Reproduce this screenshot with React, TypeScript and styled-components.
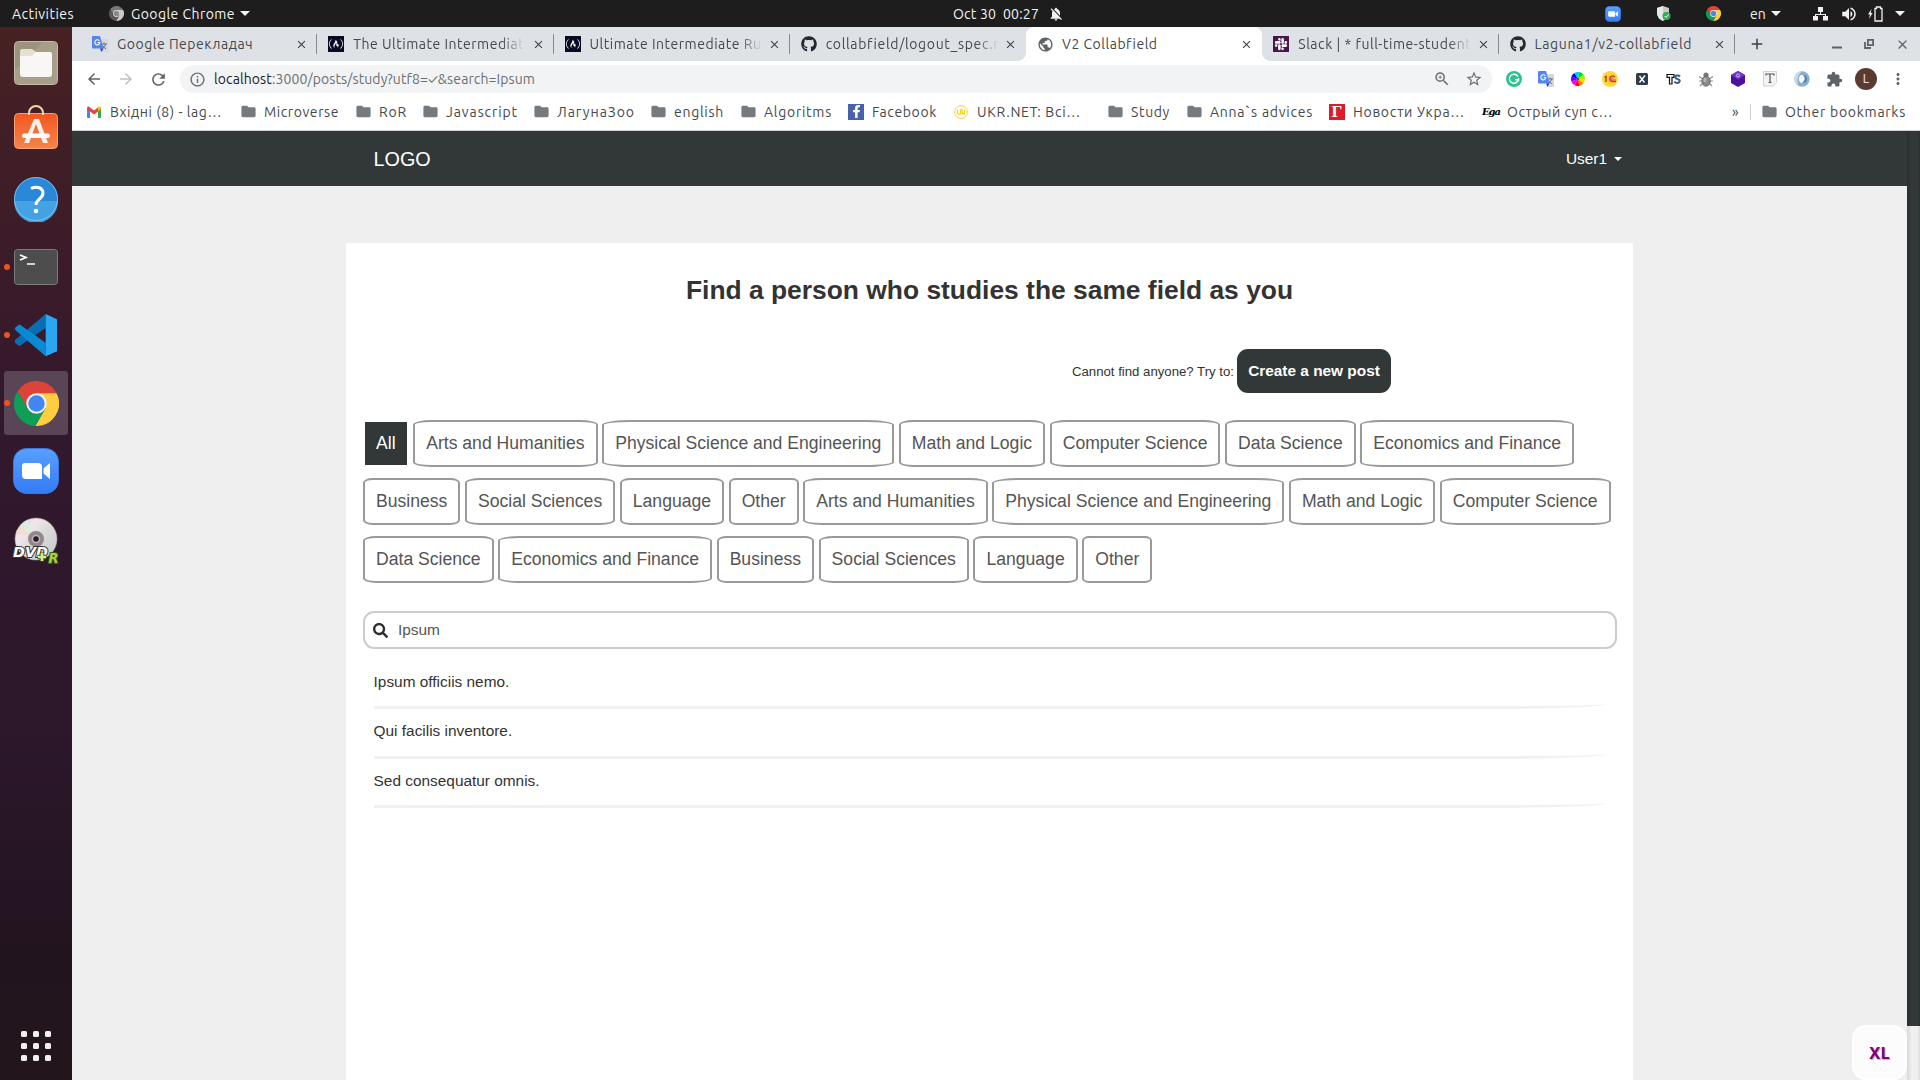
import React, { useLayoutEffect, useRef, useState } from 'react';
import styled, { createGlobalStyle, css } from 'styled-components';
import {
  MdArrowBack,
  MdArrowForward,
  MdRefresh,
  MdInfoOutline,
  MdZoomIn,
  MdStarBorder,
  MdFolder,
  MdExtension,
  MdMoreVert,
  MdClose,
  MdAdd,
  MdPublic,
  MdNotificationsOff,
  MdVolumeUp,
} from 'react-icons/md';
import { FaGithub, FaSlack, FaFacebookF, FaSearch, FaFreeCodeCamp } from 'react-icons/fa';

const uiFont = "Ubuntu, 'Noto Sans', 'Open Sans', sans-serif";
const pageFont = "'Liberation Sans', Arial, sans-serif";

const GlobalStyle = createGlobalStyle`
  * { box-sizing: border-box; }
  html, body { margin: 0; padding: 0; overflow: hidden; }
  svg { display: block; flex: none; }
`;

/* ---------- text that fills a known width ---------- */

const FitText = styled.span<{ $w: number; $fade?: boolean }>`
  flex: none;
  width: ${(p) => p.$w}px;
  white-space: pre;
  overflow: ${(p) => (p.$fade ? 'hidden' : 'visible')};
  ${(p) =>
    p.$fade &&
    css`
      mask-image: linear-gradient(to right, #000 calc(100% - 22px), transparent);
    `}
`;

type LabelProps = { w: number; fade?: boolean; children: React.ReactNode };

function Label({ w, fade, children }: LabelProps) {
  const inner = useRef<HTMLSpanElement>(null);
  const [spacing, setSpacing] = useState(0);
  useLayoutEffect(() => {
    const el = inner.current;
    if (!el) return;
    const natural = el.getBoundingClientRect().width;
    setSpacing((w - natural) / Math.max(1, (el.textContent ?? '').length));
  }, [w]);
  return (
    <FitText $w={w} $fade={fade}>
      <span ref={inner} style={{ letterSpacing: spacing }}>
        {children}
      </span>
    </FitText>
  );
}

/* ---------- desktop ---------- */

const Desktop = styled.div`
  width: 1920px;
  height: 1080px;
  display: grid;
  grid-template-rows: 27px 1fr;
  overflow: hidden;
  font-family: ${uiFont};
  background: #efefef;
`;

const TopBar = styled.header`
  display: flex;
  align-items: center;
  padding-left: 12px;
  background: #1d1d1d;
  color: #f2f2f2;
  font-size: 14px;
  line-height: 26px;
`;

const Slot = styled.span<{ $ml?: number; $w?: number }>`
  display: flex;
  flex: none;
  align-items: center;
  width: ${(p) => (p.$w ? `${p.$w}px` : 'auto')};
  margin-left: ${(p) => p.$ml ?? 0}px;
`;

const Caret = styled.i<{ $ml?: number; $size?: number }>`
  flex: none;
  margin-left: ${(p) => p.$ml ?? 0}px;
  border: ${(p) => p.$size ?? 5}px solid transparent;
  border-top-color: currentColor;
  border-bottom: 0;
`;

const Body = styled.div`
  display: grid;
  grid-template-columns: 72px 1fr;
  min-height: 0;
`;

const Dock = styled.nav`
  display: flex;
  flex-direction: column;
  align-items: center;
  gap: 4px;
  padding-top: 4px;
  background: linear-gradient(#472123 0, #3c1c29 220px, #32182d 400px, #2c172b 700px, #22141f 930px, #22161c 100%);
`;

const DockItem = styled.div<{ $active?: boolean }>`
  position: relative;
  display: flex;
  align-items: center;
  justify-content: center;
  width: 64px;
  height: 64px;
  border-radius: 3px;
  background: ${(p) => (p.$active ? '#5a4556' : 'transparent')};
`;

const RunningDot = styled.i`
  position: absolute;
  left: 0;
  top: 29px;
  width: 6px;
  height: 6px;
  border-radius: 50%;
  background: #e95420;
`;

const AppGrid = styled.div`
  display: grid;
  grid-template-columns: repeat(3, 6px);
  gap: 6px;
  margin: auto 0 19px;
`;

const GridDot = styled.i`
  width: 6px;
  height: 6px;
  border-radius: 1.5px;
  background: #f2f0ef;
`;

/* ---------- browser ---------- */

const Browser = styled.div`
  display: grid;
  grid-template-rows: 34px 36px 34px 1fr;
  min-height: 0;
  min-width: 0;
  background: #fff;
`;

const TabStrip = styled.div`
  display: flex;
  align-items: center;
  padding-left: 9px;
  background: #dee1e6;
  color: #45494d;
  font-size: 14px;
`;

const Tab = styled.div<{ $active?: boolean }>`
  position: relative;
  display: flex;
  flex: none;
  align-items: center;
  width: 236.25px;
  height: 34px;
  padding: 0 8px 0 11px;
  line-height: 33px;
  background: ${(p) => (p.$active ? '#fff' : 'transparent')};
  border-radius: 8px 8px 0 0;
  ${(p) =>
    p.$active &&
    css`
      &::before,
      &::after {
        content: '';
        position: absolute;
        bottom: 0;
        width: 8px;
        height: 8px;
      }
      &::before {
        left: -8px;
        background: radial-gradient(circle at 0 0, transparent 7.5px, #fff 8px);
      }
      &::after {
        right: -8px;
        background: radial-gradient(circle at 100% 0, transparent 7.5px, #fff 8px);
      }
    `}
`;

const TabDivider = styled.i`
  position: absolute;
  right: 0;
  top: 7px;
  width: 1px;
  height: 20px;
  background: #85888c;
`;

const Favicon = styled.span<{ $bg?: string; $gap?: number }>`
  display: flex;
  flex: none;
  align-items: center;
  justify-content: center;
  width: 16px;
  height: 16px;
  margin-right: ${(p) => p.$gap ?? 8}px;
  background: ${(p) => p.$bg ?? 'transparent'};
`;

const TabClose = styled.span`
  display: flex;
  margin-left: auto;
  width: 14px;
  color: #3c4043;
`;

const Toolbar = styled.div`
  display: flex;
  align-items: center;
  padding-left: 13px;
  color: #5f6368;
`;

const Omnibox = styled.div`
  display: flex;
  flex: none;
  align-items: center;
  width: 1312px;
  height: 28px;
  margin-left: 12px;
  padding: 0 9px 0 9px;
  border-radius: 14px;
  background: #f1f3f4;
  font-size: 14px;
  line-height: 27px;
  color: #6b6f73;
`;

const Host = styled.span`
  color: #202124;
`;

const Extensions = styled.div`
  display: flex;
  align-items: center;
  margin-left: 6px;
`;

const ExtIcon = styled.span`
  display: flex;
  align-items: center;
  justify-content: center;
  width: 32px;
  height: 28px;
`;

const Avatar = styled.span`
  width: 22px;
  height: 22px;
  border-radius: 50%;
  background: #5b3a32;
  color: #e3dbd8;
  font: 12px/22px Roboto, sans-serif;
  text-align: center;
`;

const BookmarksBar = styled.div`
  display: flex;
  align-items: center;
  padding: 0 14px 4px 14px;
  border-bottom: 1px solid #cfd1d3;
  color: #45494d;
  font-size: 14px;
  line-height: 28px;
`;

const Bookmark = styled.div<{ $mr?: number }>`
  display: flex;
  flex: none;
  align-items: center;
  margin-right: ${(p) => p.$mr ?? 16}px;
`;

const OtherBookmarks = styled.div`
  display: flex;
  align-items: center;
  margin-left: auto;
`;

const BarRule = styled.i`
  width: 1px;
  height: 16px;
  margin: 0 10px 0 9px;
  background: #cdd0d4;
`;

/* ---------- web page ---------- */

const Viewport = styled.div`
  display: grid;
  grid-template-columns: 1835px 13px;
  min-height: 0;
  background: #efefef;
  font-family: ${pageFont};
`;

const Page = styled.main`
  position: relative;
  display: grid;
  grid-template-rows: 55px 1fr;
  min-height: 0;
`;

const NavBar = styled.nav`
  display: flex;
  align-items: center;
  justify-content: space-between;
  padding: 0 285px 0 301.6px;
  background: #323738;
  color: #fff;
`;

const Brand = styled.a`
  font-size: 19.8px;
  line-height: 22px;
`;

const UserMenu = styled.a`
  display: flex;
  align-items: center;
  font-size: 15.4px;
  line-height: 22px;
`;

const Scrollbar = styled.div`
  display: grid;
  grid-template-rows: 895px 1fr;
`;

const ScrollThumb = styled.i`
  background: linear-gradient(to right, #2a2e2f, #323738 30%, #323738 80%, #2c3031);
`;

const ScrollTrack = styled.i`
  background: linear-gradient(to right, #d8d8d8, #f1f1f1 40%, #eee 80%, #dcdcdc);
`;

const Card = styled.section`
  display: flex;
  flex-direction: column;
  width: 1287px;
  margin: 57px 0 0 274px;
  padding: 0 16px 0 17px;
  background: #fff;
`;

const Title = styled.h1`
  margin: 31px 1px 0 0;
  font-size: 26.4px;
  line-height: 32px;
  font-weight: 700;
  text-align: center;
  color: #333;
`;

const CreateRow = styled.div`
  display: flex;
  align-items: center;
  justify-content: flex-end;
  gap: 3px;
  margin: 43px 226px 0 0;
  font-size: 13.2px;
  color: #333;
`;

const CreateHint = styled.span`
  line-height: 43px;
  padding-top: 1px;
`;

const CreateButton = styled.button`
  width: 154px;
  height: 44px;
  padding: 0;
  border: 0;
  border-radius: 11px;
  background: #323738;
  color: #fff;
  font: 700 15.4px ${pageFont};
  white-space: nowrap;
`;

const Filters = styled.div`
  display: flex;
  flex-wrap: wrap;
  gap: 11px 4.6px;
  margin-top: 27px;
`;

const Filter = styled.a<{ $selected?: boolean }>`
  height: 47px;
  padding: 0 11px;
  border: 2px solid ${(p) => (p.$selected ? '#fff' : '#999')};
  border-radius: ${(p) => (p.$selected ? '0' : '10%')};
  background: ${(p) => (p.$selected ? '#323738' : '#fff')};
  background-clip: padding-box;
  color: ${(p) => (p.$selected ? '#fff' : '#555')};
  font-size: 17.6px;
  line-height: 42px;
`;

const SearchBox = styled.label`
  display: flex;
  align-items: center;
  gap: 10px;
  height: 38px;
  margin-top: 28px;
  padding: 0 8px;
  border: 2px solid #ccc;
  border-radius: 11px;
  color: #2b2f30;
`;

const SearchInput = styled.input`
  flex: 1;
  padding: 0;
  border: 0;
  outline: 0;
  background: none;
  font: 15.4px ${pageFont};
  color: #555;
`;

const Results = styled.ul`
  list-style: none;
  margin: 11px 11px 0 10.6px;
  padding: 0;
`;

const Result = styled.li`
  height: 49.4px;
  border-bottom: 3px solid #f1f1f1;
  border-bottom-right-radius: 10%;
  font-size: 15.4px;
  line-height: 43px;
  color: #333;
`;

const SizeBadge = styled.div`
  position: absolute;
  right: 0;
  bottom: 0;
  display: flex;
  align-items: center;
  justify-content: center;
  width: 55px;
  height: 55px;
  padding-bottom: 1px;
  border: 2px solid #fff;
  border-radius: 14px;
  background: #fcfcfc;
  color: #800080;
  font: 700 16.5px 'Noto Sans', sans-serif;
  text-shadow: 1px 1px 1px rgba(0, 0, 0, 0.3);
`;

/* ---------- drawings ---------- */

function ChromeLogo({ size, mono }: { size: number; mono?: boolean }) {
  const [red, yellow, green, blue, ring] = mono
    ? ['#777', '#c9c9c9', '#5a5a5a', '#888', '#ddd']
    : ['#dc4437', '#ffcd40', '#109d58', '#4285f4', '#f1f1f1'];
  return (
    <svg width={size} height={size} viewBox="2 2 44 44">
      <path fill={red} d="M5.54 12.03A22 22 0 0 1 43.6 14H24L15.34 29Z" />
      <path fill={yellow} d="M43.6 14A22 22 0 0 1 22.86 45.97L32.66 29L24 14Z" />
      <path fill={green} d="M22.86 45.97A22 22 0 0 1 5.54 12.03L15.34 29H32.66Z" />
      <circle cx="24" cy="24" r="10" fill={ring} />
      <circle cx="24" cy="24" r="8" fill={blue} />
    </svg>
  );
}

function ZoomLogo({ size }: { size: number }) {
  return (
    <svg width={size} height={size} viewBox="0 0 46 46">
      <defs>
        <linearGradient id="zoomBlue" x2="0" y2="1">
          <stop stopColor="#58a0ff" />
          <stop offset="1" stopColor="#357bf6" />
        </linearGradient>
      </defs>
      <rect x=".5" y=".5" width="45" height="45" rx="13" fill="url(#zoomBlue)" stroke="#3a78dc" />
      <path fill="#fff" d="M12 15h13a4 4 0 0 1 4 4v12H13a4 4 0 0 1-4-4v-9a3 3 0 0 1 3-3Z" />
      <path fill="#fff" d="M30.500 20.500 37 15v16l-6.500-5.500Z" />
    </svg>
  );
}

const FilesLogo = () => (
  <svg width="46" height="46" viewBox="0 0 46 46">
    <rect x="1.500" y="1.500" width="43" height="43" rx="4" fill="#9c937c" stroke="#c4bca6" />
    <path d="M2 30 30 2h12l2 2v38l-2 2H4l-2-2Z" fill="#a79f89" />
    <path d="M7 11q0-2 2-2h10l4 3v6H7Z" fill="#e4dfd3" />
    <path d="M7 16h12l4-4h14q2 0 2 2v20q0 3-3 3H10q-3 0-3-3Z" fill="#f8f7f5" />
  </svg>
);

const SoftwareLogo = () => (
  <svg width="46" height="54" viewBox="0 0 46 54">
    <defs>
      <linearGradient id="bag" x2="0" y2="1">
        <stop stopColor="#f3571f" />
        <stop offset="1" stopColor="#f4844d" />
      </linearGradient>
    </defs>
    <rect x="1.500" y="9.500" width="43" height="35" rx="4" fill="url(#bag)" stroke="#f7a077" />
    <path d="M16 11V9a7 7 0 0 1 14 0v2" fill="none" stroke="#f2d6a9" strokeWidth="2" />
    <path d="M21 15h5l9 24h-5l-7-19-7 19h-5Z" fill="#f8efe9" />
    <rect x="9" y="29.500" width="28" height="4.500" rx="2.200" fill="#fff" />
  </svg>
);

const HelpLogo = () => (
  <svg width="46" height="46" viewBox="0 0 46 46">
    <circle cx="23" cy="23" r="22" fill="#2a88d8" />
    <path d="M1 25a22 22 0 0 0 44 0Z" fill="#45a2e2" />
    <circle cx="23" cy="23" r="21.500" fill="none" stroke="#86c4ef" strokeWidth=".8" />
    <path d="M18 12.500q4-2 7.500-1 4.500 1.500 4.500 5.500 0 3-3.500 6-3.500 2.800-3.500 6" fill="none" stroke="#fff" strokeWidth="3" />
    <circle cx="23" cy="35" r="2.300" fill="#fff" />
  </svg>
);

const TerminalLogo = () => (
  <svg width="46" height="38" viewBox="0 0 46 38">
    <rect x="1.500" y="1.500" width="43" height="35" rx="3" fill="#4d4d4d" stroke="#7c7c7c" />
    <path d="m7 7 6 2.500L7 12M14 16h8" fill="none" stroke="#fff" strokeWidth="1.700" />
  </svg>
);

const CodeLogo = () => (
  <svg width="44" height="44" viewBox="42 38 132 132">
    <path fill="#0a6db3" d="M137 41v42L58 138 45 127v-8Z" />
    <path fill="#0b89d4" d="m58 72 79 55v41L45 88v-6Z" />
    <path fill="#2aa6f2" d="m137 41 34 16v96l-34 15Z" />
  </svg>
);

const DiscLogo = () => (
  <svg width="50" height="52" viewBox="0 0 50 52">
    <defs>
      <linearGradient id="disc" x2="1" y2="1">
        <stop stopColor="#cfd2d2" />
        <stop offset=".3" stopColor="#f0e6ea" />
        <stop offset=".5" stopColor="#dcdcdc" />
        <stop offset="1" stopColor="#c6c6c6" />
      </linearGradient>
    </defs>
    <circle cx="25" cy="26" r="21" fill="url(#disc)" stroke="#aaa" strokeWidth=".5" />
    <path d="M25 26 9 13q3-4 7-6Z" fill="#d9eedd" opacity=".8" />
    <path d="M25 26 5 19q2-3 4-6Z" fill="#f4dcc9" opacity=".8" />
    <circle cx="25" cy="26" r="8" fill="#91888f" />
    <circle cx="25" cy="26" r="3.500" fill="#2c172b" stroke="#bdb6bb" strokeWidth="1.500" />
    <text x="2" y="43.500" fontFamily="'DejaVu Sans'" fontWeight="700" fontStyle="italic" fontSize="13.500" textLength="35" lengthAdjust="spacingAndGlyphs" fill="#fff" stroke="#333" strokeWidth="2" paintOrder="stroke">DVD</text>
    <path d="M31 39.500v9M26.500 44h9" stroke="#3c5a10" strokeWidth="4.500" />
    <path d="M31 40v8M27 44h8" stroke="#d3ec86" strokeWidth="2.600" />
    <text x="37.500" y="49.500" fontFamily="'DejaVu Sans'" fontWeight="700" fontStyle="italic" fontSize="13.500" textLength="10" lengthAdjust="spacingAndGlyphs" fill="#a9d042" stroke="#3c5a10" strokeWidth="2" paintOrder="stroke">R</text>
  </svg>
);

const TranslateLogo = () => (
  <svg width="16" height="16" viewBox="0 0 16 16">
    <path d="M6 3h9a1 1 0 0 1 1 1v11a1 1 0 0 1-1 1h-5Z" fill="#d5d7da" />
    <path d="M9 8h6M12 6.500V8M10 12.500q3-1.500 3.800-4.500M10.500 9.500q1.500 2.500 3.500 3.300" stroke="#6d7277" fill="none" />
    <path d="M1 0h7l3.500 12.500H1a1 1 0 0 1-1-1V1a1 1 0 0 1 1-1Z" fill="#5484f0" />
    <path d="M8 12.500h3.500L9.500 16Z" fill="#2743c4" />
    <path d="M7.300 4.800a2.500 2.500 0 1 0 .5 1.700H5.500" fill="none" stroke="#fff" strokeWidth="1.100" />
  </svg>
);

const GmailLogo = () => (
  <svg width="14" height="12" viewBox="0 0 14 12">
    <path d="M0 2v9q0 1 1 1h2V5Z" fill="#4285f4" />
    <path d="M14 2v9q0 1-1 1h-2V5Z" fill="#34a853" />
    <path d="M11 1.500v4L14 3V2q-1-2.500-3-.5Z" fill="#fbbc04" />
    <path d="M0 2q1-2.500 3-.5l4 3 4-3v4L7 8.500 0 3Z" fill="#ea4335" />
  </svg>
);

const ShieldCheck = () => (
  <svg width="14" height="16" viewBox="0 0 14 16">
    <path d="M6 0 12 2v5q0 5-6 8-6-3-6-8V2Z" fill="#c9cbc9" />
    <path d="M6 0v15q-6-3-6-8V2Z" fill="#e7e8e7" />
    <circle cx="9.500" cy="10" r="4" fill="#2fae4d" />
    <path d="m7.500 10 1.500 1.500 2.500-3" fill="none" stroke="#fff" />
  </svg>
);

const NetworkIcon = () => (
  <svg width="15" height="14" viewBox="0 0 15 14" fill="#f2f2f2">
    <path d="M5 0h5v5H8v2h5v2h2v4.500h-5V9h2V8H3v1h2v4.500H0V9h2V7h5V5H5Z" />
  </svg>
);

const BatteryIcon = () => (
  <svg width="15" height="16" viewBox="0 0 15 16">
    <path d="M3.500 3 0 8.500h2L1 13l3.500-6H2.800Z" fill="#f2f2f2" />
    <path d="M7 2.500h1.500V1h4v1.500H14V15H7Z" fill="none" stroke="#f2f2f2" strokeWidth="1.300" />
  </svg>
);

const RestoreIcon = () => (
  <svg width="10" height="10" viewBox="0 0 10 10" fill="none" stroke="#5f6368" strokeWidth="1.800">
    <path d="M3.900.9h5.200v5.200H3.900ZM1 3v6h6" />
  </svg>
);

const ColorWheel = () => {
  const colors = ['#ffd400', '#ff7a00', '#f00', '#e0f', '#7a00ff', '#00f', '#00c8ff', '#00e000', '#a8f000'];
  const step = (Math.PI * 2) / colors.length;
  return (
    <svg width="14" height="14" viewBox="-7 -7 14 14">
      {colors.map((c, i) => {
        const a = i * step;
        const b = a + step;
        return (
          <path key={c} fill={c} d={`M0 0L${7 * Math.cos(a)} ${7 * Math.sin(a)}A7 7 0 0 1 ${7 * Math.cos(b)} ${7 * Math.sin(b)}Z`} />
        );
      })}
      <circle r="1" fill="#333" />
    </svg>
  );
};

const BugIcon = () => (
  <svg width="14" height="15" viewBox="0 0 14 15">
    <path d="M0 4.500 4 7M14 4.500 10 7M0 9h14M1 14l3.500-3.500M13 14l-3.500-3.500" stroke="#8b8b8b" strokeWidth="1.100" />
    <circle cx="7" cy="3" r="2.600" fill="#777" />
    <ellipse cx="7" cy="9.200" rx="4.200" ry="5" fill="#8a8a8a" stroke="#606060" strokeWidth=".8" />
    <ellipse cx="6" cy="8" rx="1.500" ry="2.200" fill="#b5b5b5" />
  </svg>
);

const extensions: React.ReactNode[] = [
  <svg width="16" height="16" viewBox="0 0 16 16">
    <circle cx="8" cy="8" r="8" fill="#2bc48e" />
    <path d="M11.800 5.500a4.500 4.500 0 1 0 .5 3.200H9M12.500 7v3.500" fill="none" stroke="#fff" strokeWidth="1.400" />
  </svg>,
  <TranslateLogo />,
  <ColorWheel />,
  <svg width="16" height="16" viewBox="0 0 16 16">
    <circle cx="8" cy="8" r="8" fill="#fbd73c" />
    <path d="M2.500 6.500 4 5.500V11M13 6.200a2.800 2.800 0 1 0-2.800 4.300H14" fill="none" stroke="#d9342b" strokeWidth="1.500" />
    <path d="M11 7.800a1 1 0 1 0-.8 1.200H14" fill="none" stroke="#d9342b" strokeWidth=".8" />
  </svg>,
  <svg width="12" height="12" viewBox="0 0 12 12">
    <rect width="12" height="12" rx="1.500" fill="#2f3d4a" />
    <path d="m3.500 3 5 6.500M9 2.500 3.500 9.500" stroke="#fff" strokeWidth="1.400" />
  </svg>,
  <svg width="16" height="12" viewBox="0 0 16 12">
    <path d="M1 1.500h7v2.800H6V11H3.500V4.300H1Z" fill="#fff" stroke="#111" strokeWidth="1.200" />
    <path d="M14 3.500q-1-1.200-3-1-2 .3-1.800 1.800.3 1.400 2.500 1.800 2.300.6 2 2.300-.5 1.500-2.500 1.500-1.700 0-3-1.200" fill="none" stroke="#3a6186" strokeWidth="2" />
  </svg>,
  <BugIcon />,
  <svg width="16" height="16" viewBox="0 0 16 16">
    <path d="m8 0 7 4v8l-7 4-7-4V4Z" fill="#4c1099" />
    <path d="m8 0 7 4-7 4.500L1 4Z" fill="#7436c9" />
    <circle cx="8" cy="4.500" r="1.600" fill="none" stroke="#d7c0f3" strokeWidth=".9" />
  </svg>,
  <svg width="14" height="16" viewBox="0 0 14 16">
    <path d="M.5.500h13v11l-3 3.500H.5Z" fill="#f4f4f4" stroke="#d2d2d2" />
    <path d="M3 4.500V3h8v1.500M7 3v8.500M5.500 11.500h3" fill="none" stroke="#555" strokeWidth="1.200" />
  </svg>,
  <svg width="16" height="16" viewBox="0 0 16 16">
    <circle cx="8" cy="8" r="7.700" fill="#89aed2" />
    <path d="M8 .5A7.500 7.500 0 0 0 4 14.500Q2 5 8 .5Z" fill="#c7daec" />
    <ellipse cx="8" cy="8" rx="3" ry="4" fill="#fff" />
    <path d="M9 4q4 4-1 8 5 0 5-4T9 4Z" fill="#4f7fb2" />
  </svg>,
  <MdExtension size={17} color="#5f6368" />,
  <Avatar>L</Avatar>,
  <MdMoreVert size={18} color="#5f6368" />,
];

/* ---------- data ---------- */

type TabInfo = {
  title: string;
  w: number;
  icon: React.ReactNode;
  bg?: string;
  fade?: boolean;
  active?: boolean;
  divider?: boolean;
};

const tabs: TabInfo[] = [
  { title: 'Google Перекладач', w: 136, icon: <TranslateLogo />, divider: true },
  { title: 'The Ultimate Intermediat', w: 171, icon: <FaFreeCodeCamp size={14} color="#fff" />, bg: '#0a0a23', fade: true, divider: true },
  { title: 'Ultimate Intermediate Ru', w: 172, icon: <FaFreeCodeCamp size={14} color="#fff" />, bg: '#0a0a23', fade: true, divider: true },
  { title: 'collabfield/logout_spec.r', w: 173, icon: <FaGithub size={16} color="#24292e" />, fade: true },
  { title: 'V2 Collabfield', w: 95, icon: <MdPublic size={17} color="#5f6368" />, active: true },
  { title: 'Slack | * full-time-student', w: 173, icon: <FaSlack size={14} color="#fff" />, bg: '#4a154b', fade: true, divider: true },
  { title: 'Laguna1/v2-collabfield', w: 157, icon: <FaGithub size={16} color="#24292e" />, divider: true },
];

const Folder = () => <MdFolder size={17} color="#757a7e" />;

const Cursive = styled.span`
  color: #000;
  font: italic 700 10px 'DejaVu Serif', serif;
  letter-spacing: -1px;
`;

const RedLetter = styled.span`
  color: #fff;
  font: 700 17px/16px 'Liberation Serif', serif;
`;

type BookmarkInfo = { title: string; w: number; icon?: React.ReactNode; bg?: string; mr?: number };

const bookmarks: BookmarkInfo[] = [
  { title: 'Вхідні (8) - lag…', w: 112, icon: <GmailLogo />, mr: 18 },
  { title: 'Microverse', w: 75 },
  { title: 'RoR', w: 28, mr: 15 },
  { title: 'Javascript', w: 72, mr: 15 },
  { title: 'ЛагунаЗоо', w: 78, mr: 15 },
  { title: 'english', w: 50 },
  { title: 'Algoritms', w: 68 },
  { title: 'Facebook', w: 65, icon: <FaFacebookF size={13} color="#fff" />, bg: '#4961ad' },
  {
    title: 'UKR.NET: Всі…',
    w: 104,
    mr: 26,
    icon: (
      <svg width="14" height="14" viewBox="0 0 14 14" fill="none" stroke="#f2cf1d">
        <circle cx="7" cy="7" r="6.400" strokeWidth=".9" />
        <path d="M3.500 4.500V8q0 1.500 1.500 1.500T6.500 8V5q1-1 1.700 0v4.500M8.200 7.500l2.300 2M10.500 4.500v5" strokeWidth="1.200" />
      </svg>
    ),
  },
  { title: 'Study', w: 39 },
  { title: 'Anna`s advices', w: 103 },
  { title: 'Новости Укра…', w: 112, icon: <RedLetter>Г</RedLetter>, bg: '#df1a2b', mr: 18 },
  { title: 'Острый суп с…', w: 106, icon: <Cursive>Ega</Cursive> },
];

const filters = [
  'All',
  'Arts and Humanities',
  'Physical Science and Engineering',
  'Math and Logic',
  'Computer Science',
  'Data Science',
  'Economics and Finance',
  'Business',
  'Social Sciences',
  'Language',
  'Other',
  'Arts and Humanities',
  'Physical Science and Engineering',
  'Math and Logic',
  'Computer Science',
  'Data Science',
  'Economics and Finance',
  'Business',
  'Social Sciences',
  'Language',
  'Other',
];

const results = ['Ipsum officiis nemo.', 'Qui facilis inventore.', 'Sed consequatur omnis.'];

const dockApps: { icon: React.ReactNode; running?: boolean; active?: boolean }[] = [
  { icon: <FilesLogo /> },
  { icon: <SoftwareLogo /> },
  { icon: <HelpLogo /> },
  { icon: <TerminalLogo />, running: true },
  { icon: <CodeLogo />, running: true },
  { icon: <ChromeLogo size={45} />, running: true, active: true },
  { icon: <ZoomLogo size={46} /> },
  { icon: <DiscLogo /> },
];

export default function App() {
  return (
    <Desktop>
      <GlobalStyle />
      <TopBar>
        <Label w={62}>Activities</Label>
        <Slot $ml={35} $w={16}><ChromeLogo size={15} mono /></Slot>
        <Slot $ml={6}><Label w={104}>Google Chrome</Label></Slot>
        <Caret $ml={5} />
        <Slot $ml={703}><Label w={86}>Oct 30  00:27</Label></Slot>
        <Slot $ml={9}><MdNotificationsOff size={16} /></Slot>
        <Slot $ml={541}><ZoomLogo size={16} /></Slot>
        <Slot $ml={36}><ShieldCheck /></Slot>
        <Slot $ml={35}><ChromeLogo size={15} /></Slot>
        <Slot $ml={29}><Label w={16}>en</Label></Slot>
        <Caret $ml={5} />
        <Slot $ml={32}><NetworkIcon /></Slot>
        <Slot $ml={12}><MdVolumeUp size={18} /></Slot>
        <Slot $ml={10}><BatteryIcon /></Slot>
        <Caret $ml={12} />
      </TopBar>
      <Body>
        <Dock>
          {dockApps.map((app, i) => (
            <DockItem key={i} $active={app.active}>
              {app.icon}
              {app.running && <RunningDot />}
            </DockItem>
          ))}
          <AppGrid>
            {Array.from({ length: 9 }, (_, i) => (
              <GridDot key={i} />
            ))}
          </AppGrid>
        </Dock>
        <Browser>
          <TabStrip>
            {tabs.map((tab) => (
              <Tab key={tab.title} $active={tab.active}>
                <Favicon $bg={tab.bg} $gap={9}>{tab.icon}</Favicon>
                <Label w={tab.w} fade={tab.fade}>{tab.title}</Label>
                <TabClose><MdClose size={13} /></TabClose>
                {tab.divider && <TabDivider />}
              </Tab>
            ))}
            <Slot $ml={13}><MdAdd size={18} color="#3c4043" /></Slot>
            <Slot $ml={66}>
              <svg width="10" height="10" viewBox="0 0 10 10"><path d="M0 8.500h10" stroke="#5f6368" strokeWidth="2" /></svg>
            </Slot>
            <Slot $ml={22}><RestoreIcon /></Slot>
            <Slot $ml={21}><MdClose size={15} color="#5f6368" /></Slot>
          </TabStrip>
          <Toolbar>
            <Slot $w={32}><MdArrowBack size={18} /></Slot>
            <Slot $w={32}><MdArrowForward size={18} color="#bdc1c6" /></Slot>
            <Slot $w={19}><MdRefresh size={19} /></Slot>
            <Omnibox>
              <Slot $w={16}><MdInfoOutline size={17} /></Slot>
              <Slot $ml={9}>
                <Label w={321}><Host>localhost</Host>:3000/posts/study?utf8=✓&amp;search=Ipsum</Label>
              </Slot>
              <Slot $ml={898}><MdZoomIn size={18} /></Slot>
              <Slot $ml={14}><MdStarBorder size={18} /></Slot>
            </Omnibox>
            <Extensions>
              {extensions.map((icon, i) => (
                <ExtIcon key={i}>{icon}</ExtIcon>
              ))}
            </Extensions>
          </Toolbar>
          <BookmarksBar>
            {bookmarks.map((b) => (
              <Bookmark key={b.title} $mr={b.mr}>
                <Favicon $bg={b.bg}>{b.icon ?? <Folder />}</Favicon>
                <Label w={b.w}>{b.title}</Label>
              </Bookmark>
            ))}
            <OtherBookmarks>
              <Label w={9}>»</Label>
              <BarRule />
              <Favicon><Folder /></Favicon>
              <Label w={121}>Other bookmarks</Label>
            </OtherBookmarks>
          </BookmarksBar>
          <Viewport>
            <Page>
              <NavBar>
                <Brand>LOGO</Brand>
                <UserMenu>
                  User1
                  <Caret $ml={7} $size={4.5} />
                </UserMenu>
              </NavBar>
              <Card>
                <Title>Find a person who studies the same field as you</Title>
                <CreateRow>
                  <CreateHint>Cannot find anyone? Try to:</CreateHint>
                  <CreateButton>Create a new post</CreateButton>
                </CreateRow>
                <Filters>
                  {filters.map((name, i) => (
                    <Filter key={i} $selected={i === 0}>{name}</Filter>
                  ))}
                </Filters>
                <SearchBox>
                  <FaSearch size={15} />
                  <SearchInput defaultValue="Ipsum" />
                </SearchBox>
                <Results>
                  {results.map((text) => (
                    <Result key={text}>{text}</Result>
                  ))}
                </Results>
              </Card>
              <SizeBadge>XL</SizeBadge>
            </Page>
            <Scrollbar>
              <ScrollThumb />
              <ScrollTrack />
            </Scrollbar>
          </Viewport>
        </Browser>
      </Body>
    </Desktop>
  );
}
